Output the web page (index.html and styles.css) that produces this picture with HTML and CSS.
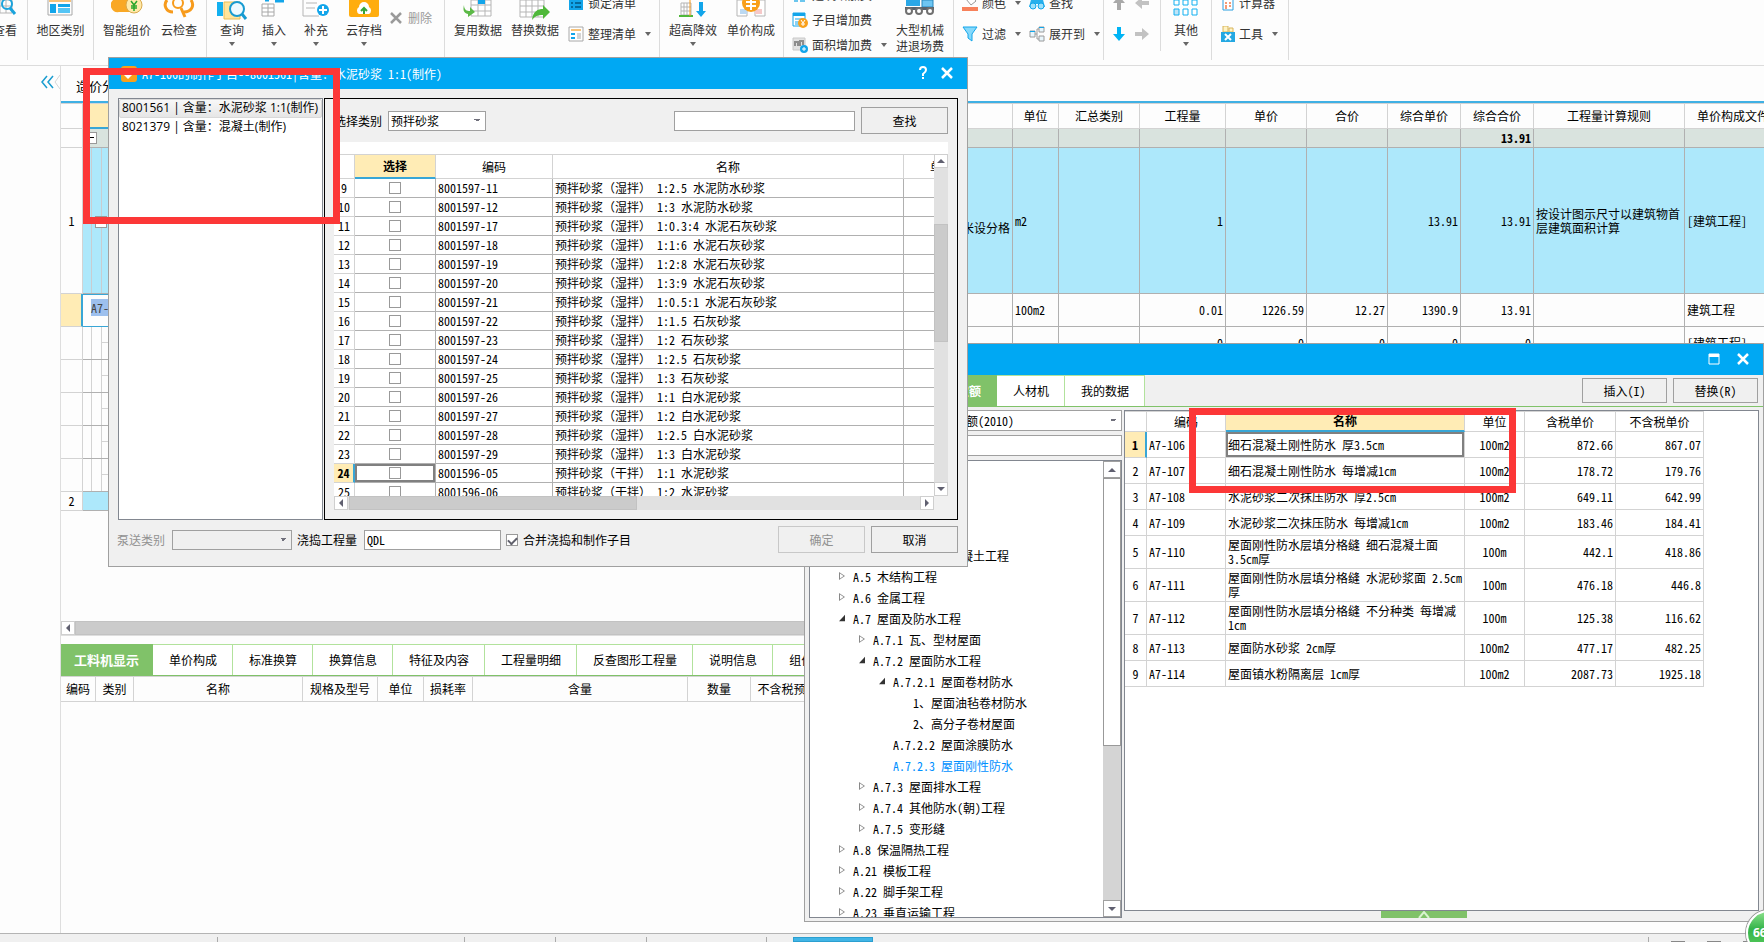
FILE: index.html
```html
<!DOCTYPE html>
<html lang="zh-CN">
<head>
<meta charset="utf-8">
<title>造价分析</title>
<link rel="stylesheet" href="styles.css">
</head>
<body>
<header class="ribbon">
  <div class="group g-view"><button class="big"><svg class="ico" width="24" height="18"><path d="M2 0h17v13H5M7 0v13M13 0v13M2 6h17" fill="none" stroke="#b5b5b5"/><circle cx="14" cy="4" r="5" fill="none" stroke="#1aa3dc" stroke-width="2"/><path d="M17 8l5 6" stroke="#1aa3dc" stroke-width="3"/></svg>查看</button></div>
  <div class="group g-area"><button class="big"><svg class="ico" width="26" height="18"><path d="M1 0v15h24V0" fill="none" stroke="#a8a8a8"/><path d="M2 0h22v2H2z" fill="#f6c27a"/><path d="M3 4h6v9H3zM11 4h12v3H11z" fill="#12a5ea"/><path d="M11 8h12v5H11z" fill="#55c5f5"/></svg>地区类别</button></div>
  <div class="group g-smart">
    <button class="big"><svg class="ico" width="32" height="18"><path d="M2 0a7 7 0 0 0 6 12h14V0z" fill="#f9a825"/><circle cx="23" cy="5" r="8" fill="#ffe9a8" stroke="#d9a94c"/><path d="M20 1l3 4 3-4M23 5v6M20 6h6M20 8h6" fill="none" stroke="#2ba62b" stroke-width="1.5"/></svg>智能组价</button>
    <button class="big"><svg class="ico" width="32" height="18"><path d="M4 0C0 5 3 12 10 12M28 0c4 6 0 12-7 12" fill="none" stroke="#f79b1c" stroke-width="3"/><circle cx="15" cy="3" r="5" fill="none" stroke="#f79b1c" stroke-width="2"/><path d="M18 8l4 9" stroke="#f79b1c" stroke-width="3"/></svg>云检查</button>
  </div>
  <div class="group g-edit">
    <button class="big"><svg class="ico" width="32" height="18" viewBox="0 0 32 18"><path d="M1 0h6v14H1z" fill="#12b0f0"/><path d="M8 0h16v17H8z" fill="#ffe49a" stroke="#e8bd57"/><circle cx="21" cy="7" r="7" fill="#eefaff" stroke="#179bd1" stroke-width="2"/><path d="M26 12l4 5" stroke="#179bd1" stroke-width="3"/></svg>查询<i class="caret"></i></button>
    <button class="big"><svg class="ico" width="28" height="18"><path d="M2 4h12v12H2zM8 4v12M2 8h12M2 12h12" fill="#fff" stroke="#a8a8a8"/><path d="M5 0h4M15 1h9" stroke="#12a5ea" stroke-width="3"/></svg>插入<i class="caret"></i></button>
    <button class="big"><svg class="ico" width="28" height="20"><path d="M1 0v16h16M4 3h11M4 8h9" fill="none" stroke="#b5b5b5"/><circle cx="21" cy="10" r="6" fill="#12a5ea"/><path d="M21 6v8M17 10h8" stroke="#fff" stroke-width="2"/></svg>补充<i class="caret"></i></button>
    <div class="pair"><button class="big"><svg class="ico" width="30" height="18"><path d="M0 0h30v15q0 2-2 2H2q-2 0-2-2z" fill="#ffad0e"/><path d="M10 14a4 4 0 0 1 0-7 5 5 0 0 1 10 0 4 4 0 0 1 0 7z" fill="#fff"/><path d="M15 14V9M12 11l3-3 3 3" fill="none" stroke="#35a53a" stroke-width="2"/></svg>云存档<i class="caret"></i></button>
    <button class="small disabled" disabled><svg width="12" height="12"><path d="M1 1l10 10M11 1L1 11" stroke="#9a9a9a" stroke-width="2.5"/></svg>删除</button></div>
  </div>
  <div class="group g-data">
    <button class="big"><svg class="ico" width="30" height="18"><path d="M8 0h20v16H8zM15 0v16M22 0v16M8 5h20M8 11h20" fill="#fff" stroke="#b5b5b5"/><path d="M15 0h7v4h-7z" fill="#12a5ea"/><path d="M1 5c0 5 3 6 6 6V7l5 5-7 5v-3C0 13 0 9 1 5z" fill="#5cb947"/></svg>复用数据</button>
    <button class="big"><svg class="ico" width="32" height="20"><path d="M1 0h24v17H1zM7 0v17M13 0v17M19 0v17M1 6h24M1 12h24" fill="#fff" stroke="#b5b5b5"/><path d="M13 20c1-9 6-11 11-11V5l7 7-7 7v-4c-5 0-8 1-11 5z" fill="#4fb83a"/></svg>替换数据</button>
    <div class="stack">
      <button class="small"><svg width="16" height="16"><path d="M1 1h14v14H1z" fill="#12a5ea"/><path d="M3 8h2M7 8h6M3 12h2M7 12h6" stroke="#056a9c" stroke-width="2"/></svg>锁定清单</button>
      <button class="small"><svg width="16" height="16"><path d="M1 1h14v14H1z" fill="#fff" stroke="#a8a8a8"/><path d="M3 3h10v2H3z" fill="#f6c27a"/><path d="M3 7h4v2H3zM3 11h4v2H3z" fill="#12a5ea"/><path d="M9 8h4M9 10h4M9 12h4" stroke="#aaa"/></svg>整理清单<i class="caret"></i></button>
    </div>
  </div>
  <div class="group g-price">
    <button class="big"><svg class="ico" width="28" height="20"><path d="M2 3h10v12H2zM5 3v12M8 3v12M2 7h10M2 11h10" fill="#fff" stroke="#b5b5b5"/><path d="M0 16h14" stroke="#4fb83a" stroke-width="2"/><path d="M11 0v16" stroke="#f79b1c"/><path d="M20 2h4v9h3l-5 6-5-6h3z" fill="#12a5ea"/></svg>超高降效<i class="caret"></i></button>
    <button class="big"><svg class="ico" width="30" height="18"><path d="M1 0h10v16H1zM19 0h10v16H19z" fill="#fff" stroke="#b5b5b5"/><path d="M4 9h7v5H4z" fill="#bcd9f2"/><path d="M19 9h7v5h-7z" fill="#f6c9c9"/><circle cx="15" cy="3" r="9" fill="#f9a01b"/><path d="M10 2h10M10 6h10M15 0v10" stroke="#fff" stroke-width="2"/></svg>单价构成</button>
  </div>
  <div class="group g-fee">
    <div class="stack triple">
      <button class="small"><svg width="16" height="16"><path d="M2 8h4v7H2zM8 5h5v10H8z" fill="#6cc6ee"/></svg>建筑增加费</button>
      <button class="small"><svg width="16" height="16"><path d="M1 1h12v13H1z" fill="#fff" stroke="#12a5ea"/><path d="M1 1h12v3H1z" fill="#12a5ea"/><path d="M3 7h8M3 10h5M3 12h4" stroke="#12a5ea"/><circle cx="11" cy="11" r="5" fill="#f9a01b"/><path d="M9 8l2 3 2-3M11 11v3M9 12h4" fill="none" stroke="#fff"/></svg>子目增加费</button>
      <button class="small"><svg width="16" height="16"><path d="M1 1h12v12H1z" fill="#e2e2e2" stroke="#c8c8c8"/><path d="M3 9V5h3v4M8 9V4h3v4" fill="none" stroke="#8d8d8d" stroke-width="2"/><circle cx="12" cy="12" r="4" fill="#12a5ea"/><path d="M12 10v4M10 12h4" stroke="#fff"/></svg>面积增加费<i class="caret"></i></button>
    </div>
    <button class="big"><svg class="ico" width="32" height="18"><path d="M2 0h14v6H2z" fill="#2aa7e6"/><path d="M18 0h11v7H18z" fill="#6ec6f3" stroke="#2987bd"/><path d="M1 7h29v3H1z" fill="#58636e"/><g fill="#fff" stroke="#707070" stroke-width="2"><circle cx="5" cy="11" r="3"/><circle cx="15" cy="11" r="3"/><circle cx="26" cy="11" r="3"/></g></svg>大型机械<br>进退场费</button>
  </div>
  <div class="group g-filter">
    <div class="stack">
      <button class="small"><svg width="16" height="16"><path d="M4 4l5-4 5 6-5 4z" fill="#fff" stroke="#999"/><path d="M0 12h16v4H0z" fill="#f7815b"/></svg>颜色<i class="caret"></i></button>
      <button class="small"><svg width="16" height="16"><path d="M1 1h14L10 8v7l-4-3V8z" fill="#86d9fb" stroke="#12a5ea"/></svg>过滤<i class="caret"></i></button>
    </div>
    <div class="stack">
      <button class="small"><svg width="16" height="16"><path d="M3 1h3v4h4V1h3l3 11H9V9H7v3H0z" fill="#27b0ec"/><circle cx="4" cy="11" r="3" fill="#9ee2fb" stroke="#12a5ea"/><circle cx="12" cy="11" r="3" fill="#9ee2fb" stroke="#12a5ea"/></svg>查找</button>
      <button class="small"><svg width="16" height="16"><g fill="#e8f5fb" stroke="#9a9a9a"><path d="M1 5h5v6H1zM10 1h5v5h-5zM10 10h5v5h-5z"/><path d="M6 8h2M8 3v10M8 3h2M8 13h2" fill="none"/></g><path d="M1 5h5v1H1zM10 1h5v1h-5z" fill="#12a5ea"/></svg>展开到<i class="caret"></i></button>
    </div>
  </div>
  <div class="group g-move">
    <div class="stack">
      <button class="small" aria-label="上移"><svg width="14" height="16"><path d="M7 1l6 7H9v7H5V8H1z" fill="#a9a9a9"/></svg></button>
      <button class="small" aria-label="下移"><svg width="14" height="16"><path d="M7 15l6-7H9V1H5v7H1z" fill="#00b4f5"/></svg></button>
    </div>
    <div class="stack">
      <button class="small" aria-label="左移"><svg width="16" height="14"><path d="M1 7l7-6v4h7v4H8v4z" fill="#c2c2c2"/></svg></button>
      <button class="small" aria-label="右移"><svg width="16" height="14"><path d="M15 7L8 1v4H1v4h7v4z" fill="#c2c2c2"/></svg></button>
    </div>
  </div>
  <div class="group g-other"><button class="big"><svg class="ico" width="26" height="18"><g fill="#fff" stroke="#12b0f0"><path d="M1 0h5v5H1zM10 0h5v5h-5zM19 0h5v5h-5z"/><path d="M1 9h5v6H1z" fill="#bfe4f7"/><path d="M10 9h5v6h-5zM19 9h5v6h-5z"/></g></svg>其他<i class="caret"></i></button></div>
  <div class="group g-tools">
    <div class="stack">
      <button class="small"><svg width="14" height="16"><path d="M2 1h10v14H2z" fill="#fff" stroke="#2a9fe0"/><path d="M4 3h6v2H4z" fill="#2a9fe0"/><path d="M4 8h2M8 8h2M4 11h2M8 11h2M4 13h2" stroke="#f07a4a" stroke-width="1.5"/></svg>计算器</button>
      <button class="small"><svg width="14" height="16"><path d="M2 0h5v6H2zM8 2h4v4H8z" fill="#fff3c4" stroke="#d7b45b"/><path d="M0 6h14v10H0z" fill="#24a8e2"/><path d="M4 8l6 6M10 8l-6 6" stroke="#fff" stroke-width="2"/></svg>工具<i class="caret"></i></button>
    </div>
  </div>
</header>

<main class="workspace">
  <aside class="gutter">
    <button aria-label="收起"><svg width="20" height="32" viewBox="0 2 20 32" fill="none"><path d="M7 12l-5 6 5 6M13 12l-5 6 5 6" stroke="#1b9dd0" stroke-width="1.5"/><path d="M20 11l-5 7 5 7" stroke="#d6d6d6"/></svg></button>
  </aside>
  <section class="content">
    <nav class="top-tabs"><a href="#">造价分析</a></nav>
    <div class="sheet">
      <table class="cells main-table">
        <colgroup><col class="w22"><col class="w250"><col class="w680"><col class="w46"><col class="w81"><col class="w86"><col class="w81"><col class="w81"><col class="w73"><col class="w73"><col class="w151"><col class="w97"></colgroup>
        <thead><tr><th></th><th class="hot">编码</th><th>名称</th><th>单位</th><th>汇总类别</th><th>工程量</th><th>单价</th><th>合价</th><th>综合单价</th><th>综合合价</th><th>工程量计算规则</th><th>单价构成文件</th></tr></thead>
        <tbody>
          <tr class="sum"><th></th><td class="code"><i class="box"></i></td><td></td><td></td><td></td><td></td><td></td><td></td><td></td><td class="num"><b>13.91</b></td><td></td><td></td></tr>
          <tr class="item tall"><th>1</th><td class="code"><i class="box inner"></i></td><td class="num desc">米设分格</td><td>m2</td><td></td><td class="num">1</td><td></td><td></td><td class="num">13.91</td><td class="num">13.91</td><td>按设计图示尺寸以建筑物首层建筑面积计算</td><td>[建筑工程]</td></tr>
          <tr class="sub"><th class="hot-row"></th><td class="edit"><mark>A7-106</mark></td><td></td><td>100m2</td><td></td><td class="num">0.01</td><td class="num">1226.59</td><td class="num">12.27</td><td class="num">1390.9</td><td class="num">13.91</td><td></td><td>建筑工程</td></tr>
          <tr class="sub"><th></th><td class="branch"></td><td></td><td></td><td></td><td class="num">0</td><td class="num">0</td><td class="num">0</td><td class="num">0</td><td class="num">0</td><td></td><td>[建筑工程]</td></tr>
          <tr class="sub"><th></th><td class="branch"></td><td></td><td></td><td></td><td></td><td></td><td></td><td></td><td></td><td></td><td></td></tr>
          <tr class="sub"><th></th><td class="branch"></td><td></td><td></td><td></td><td></td><td></td><td></td><td></td><td></td><td></td><td></td></tr>
          <tr class="sub"><th></th><td class="branch"></td><td></td><td></td><td></td><td></td><td></td><td></td><td></td><td></td><td></td><td></td></tr>
          <tr class="sub"><th></th><td class="branch"></td><td></td><td></td><td></td><td></td><td></td><td></td><td></td><td></td><td></td><td></td></tr>
          <tr class="item short"><th>2</th><td></td><td></td><td></td><td></td><td></td><td></td><td></td><td></td><td></td><td></td><td></td></tr>
        </tbody>
      </table>
    </div>
    <div class="hbar"><button class="sb" aria-label="向左"><i class="tri left"></i></button><span class="thumb grow"></span></div>
    <div class="detail">
      <nav class="tabs"><a class="on" href="#">工料机显示</a><a href="#">单价构成</a><a href="#">标准换算</a><a href="#">换算信息</a><a href="#">特征及内容</a><a href="#">工程量明细</a><a href="#">反查图形工程量</a><a href="#">说明信息</a><a href="#">组价方案</a></nav>
      <div class="detail-grid">
        <table class="cells detail-table">
          <colgroup><col class="w35"><col class="w38"><col class="w169"><col class="w75"><col class="w46"><col class="w49"><col class="w215"><col class="w63"><col class="w86"></colgroup>
          <thead><tr><th>编码</th><th>类别</th><th>名称</th><th>规格及型号</th><th>单位</th><th>损耗率</th><th>含量</th><th>数量</th><th>不含税预算价</th></tr></thead>
        </table>
      </div>
    </div>
  </section>
</main>
<footer class="status"><span class="s1"></span><span class="s2"></span><span class="s3"></span><span class="s4"></span><span class="s5"></span><span class="task"></span><span class="s6"></span><span class="dash"></span><span class="dash"></span><span class="dash"></span></footer>

<section class="window query">
  <div class="title"><span class="win-btns"><button aria-label="最大化"><svg width="12" height="12"><path d="M1 1h10v10H1z" fill="none" stroke="#fff"/><path d="M1 1h10v3H1z" fill="#fff"/></svg></button><button aria-label="关闭"><svg width="12" height="12"><path d="M1 1l10 10M11 1L1 11" stroke="#fff" stroke-width="2.5"/></svg></button></span></div>
  <div class="query-top">
    <nav class="tabs"><a href="#">清单指引</a><a href="#">清单</a><a class="on" href="#">定额</a><a href="#">人材机</a><a href="#">我的数据</a></nav>
    <div class="actions"><button class="btn">插入(I)</button><button class="btn">替换(R)</button></div>
  </div>
  <div class="query-body">
    <div class="side">
      <select class="combo" aria-label="定额库"><option>广东省建筑与装饰工程综合定额(2010)</option></select>
      <input class="field" type="text" aria-label="搜索定额">
      <div class="tree-box">
        <ul class="tree">
          <li><span class="open">建筑工程</span>
          <ul>
            <li><span class="shut">A.1 土石方</span></li>
            <li><span class="shut">A.2 桩基础</span></li>
            <li><span class="shut">A.3 砌筑工程</span></li>
            <li><span class="shut">A.4 混凝土及钢筋混凝土工程</span></li>
            <li><span class="shut">A.5 木结构工程</span></li>
            <li><span class="shut">A.6 金属工程</span></li>
            <li><span class="open">A.7 屋面及防水工程</span>
              <ul>
                <li><span class="shut">A.7.1 瓦、型材屋面</span></li>
                <li><span class="open">A.7.2 屋面防水工程</span>
                  <ul>
                    <li><span class="open">A.7.2.1 屋面卷材防水</span>
                      <ul><li><span>1、屋面油毡卷材防水</span></li><li><span>2、高分子卷材屋面</span></li></ul></li>
                    <li><span>A.7.2.2 屋面涂膜防水</span></li>
                    <li><span class="current">A.7.2.3 屋面刚性防水</span></li>
                  </ul></li>
                <li><span class="shut">A.7.3 屋面排水工程</span></li>
                <li><span class="shut">A.7.4 其他防水(朝)工程</span></li>
                <li><span class="shut">A.7.5 变形缝</span></li>
              </ul></li>
            <li><span class="shut">A.8 保温隔热工程</span></li>
            <li><span class="shut">A.21 模板工程</span></li>
            <li><span class="shut">A.22 脚手架工程</span></li>
            <li><span class="shut">A.23 垂直运输工程</span></li>
          </ul></li>
        </ul>
        <div class="vbar wide"><button class="sb" aria-label="向上"><i class="tri up"></i></button><span class="thumb"></span><button class="sb end" aria-label="向下"><i class="tri down"></i></button></div>
      </div>
    </div>
    <div class="quota-col">
      <div class="quota">
        <table class="cells quota-table">
          <colgroup><col class="w22"><col class="w79"><col class="w239"><col class="w60"><col class="w91"><col class="w88"></colgroup>
          <thead><tr><th></th><th>编码</th><th class="hot">名称</th><th>单位</th><th>含税单价</th><th>不含税单价</th></tr></thead>
          <tbody>
            <tr><th class="hot-row">1</th><td>A7-106</td><td class="picked">细石混凝土刚性防水 厚3.5cm</td><td>100m2</td><td>872.66</td><td>867.07</td></tr>
            <tr><th>2</th><td>A7-107</td><td>细石混凝土刚性防水 每增减1cm</td><td>100m2</td><td>178.72</td><td>179.76</td></tr>
            <tr><th>3</th><td>A7-108</td><td>水泥砂浆二次抹压防水 厚2.5cm</td><td>100m2</td><td>649.11</td><td>642.99</td></tr>
            <tr><th>4</th><td>A7-109</td><td>水泥砂浆二次抹压防水 每增减1cm</td><td>100m2</td><td>183.46</td><td>184.41</td></tr>
            <tr class="two"><th>5</th><td>A7-110</td><td>屋面刚性防水层填分格缝 细石混凝土面<br>3.5cm厚</td><td>100m</td><td>442.1</td><td>418.86</td></tr>
            <tr class="two"><th>6</th><td>A7-111</td><td>屋面刚性防水层填分格缝 水泥砂浆面 2.5cm<br>厚</td><td>100m</td><td>476.18</td><td>446.8</td></tr>
            <tr class="two"><th>7</th><td>A7-112</td><td>屋面刚性防水层填分格缝 不分种类 每增减<br>1cm</td><td>100m</td><td>125.38</td><td>116.62</td></tr>
            <tr><th>8</th><td>A7-113</td><td>屋面防水砂浆 2cm厚</td><td>100m2</td><td>477.17</td><td>482.25</td></tr>
            <tr><th>9</th><td>A7-114</td><td>屋面镇水粉隔离层 1cm厚</td><td>100m2</td><td>2087.73</td><td>1925.18</td></tr>
          </tbody>
        </table>
      </div>
      <button class="expander" aria-label="展开"><svg width="12" height="7"><path d="M1 7l5-6 5 6" fill="none" stroke="#d9f2cf" stroke-width="2"/></svg></button>
    </div>
  </div>
</section>

<section class="window maker" role="dialog" aria-labelledby="maker-title">
  <div class="title"><svg class="app" width="16" height="16"><rect width="16" height="16" rx="3" fill="#f9a01b"/><path d="M3 9l4 4 7-7-3-3-4 5-2-2z" fill="#fff"/></svg><span id="maker-title">A7-106的制作子目--8001561|含量：水泥砂浆 1:1(制作)</span><span class="win-btns"><button aria-label="帮助"><svg width="10" height="14"><path d="M2 4q0-3 3-3t3 3q0 2-3 4v2" fill="none" stroke="#fff" stroke-width="2"/><path d="M4 11h2v2H4z" fill="#fff"/></svg></button><button aria-label="关闭"><svg width="12" height="12"><path d="M1 1l10 10M11 1L1 11" stroke="#fff" stroke-width="2.5"/></svg></button></span></div>
  <div class="maker-body">
    <ul class="list"><li class="sel">8001561 | 含量：水泥砂浆 1:1(制作)</li><li>8021379 | 含量：混凝土(制作)</li></ul>
    <div class="frame">
      <div class="finder"><label for="kind">选择类别</label><select id="kind" class="combo"><option>预拌砂浆</option></select><input class="field" type="text" aria-label="查找内容"><button class="btn">查找</button></div>
      <div class="grid-wrap">
        <div class="viewport">
          <table class="cells mix">
            <colgroup><col class="w21"><col class="w81"><col class="w117"><col class="w351"><col class="w77"></colgroup>
            <thead><tr><th></th><th class="hot">选择</th><th>编码</th><th>名称</th><th>单位</th></tr></thead>
            <tbody>
              <tr><th>9</th><td><input type="checkbox" aria-label="选择 9"></td><td>8001597-11</td><td>预拌砂浆（湿拌） 1:2.5 水泥防水砂浆</td><td></td></tr>
              <tr><th>10</th><td><input type="checkbox" aria-label="选择 10"></td><td>8001597-12</td><td>预拌砂浆（湿拌） 1:3 水泥防水砂浆</td><td></td></tr>
              <tr><th>11</th><td><input type="checkbox" aria-label="选择 11"></td><td>8001597-17</td><td>预拌砂浆（湿拌） 1:0.3:4 水泥石灰砂浆</td><td></td></tr>
              <tr><th>12</th><td><input type="checkbox" aria-label="选择 12"></td><td>8001597-18</td><td>预拌砂浆（湿拌） 1:1:6 水泥石灰砂浆</td><td></td></tr>
              <tr><th>13</th><td><input type="checkbox" aria-label="选择 13"></td><td>8001597-19</td><td>预拌砂浆（湿拌） 1:2:8 水泥石灰砂浆</td><td></td></tr>
              <tr><th>14</th><td><input type="checkbox" aria-label="选择 14"></td><td>8001597-20</td><td>预拌砂浆（湿拌） 1:3:9 水泥石灰砂浆</td><td></td></tr>
              <tr><th>15</th><td><input type="checkbox" aria-label="选择 15"></td><td>8001597-21</td><td>预拌砂浆（湿拌） 1:0.5:1 水泥石灰砂浆</td><td></td></tr>
              <tr><th>16</th><td><input type="checkbox" aria-label="选择 16"></td><td>8001597-22</td><td>预拌砂浆（湿拌） 1:1.5 石灰砂浆</td><td></td></tr>
              <tr><th>17</th><td><input type="checkbox" aria-label="选择 17"></td><td>8001597-23</td><td>预拌砂浆（湿拌） 1:2 石灰砂浆</td><td></td></tr>
              <tr><th>18</th><td><input type="checkbox" aria-label="选择 18"></td><td>8001597-24</td><td>预拌砂浆（湿拌） 1:2.5 石灰砂浆</td><td></td></tr>
              <tr><th>19</th><td><input type="checkbox" aria-label="选择 19"></td><td>8001597-25</td><td>预拌砂浆（湿拌） 1:3 石灰砂浆</td><td></td></tr>
              <tr><th>20</th><td><input type="checkbox" aria-label="选择 20"></td><td>8001597-26</td><td>预拌砂浆（湿拌） 1:1 白水泥砂浆</td><td></td></tr>
              <tr><th>21</th><td><input type="checkbox" aria-label="选择 21"></td><td>8001597-27</td><td>预拌砂浆（湿拌） 1:2 白水泥砂浆</td><td></td></tr>
              <tr><th>22</th><td><input type="checkbox" aria-label="选择 22"></td><td>8001597-28</td><td>预拌砂浆（湿拌） 1:2.5 白水泥砂浆</td><td></td></tr>
              <tr><th>23</th><td><input type="checkbox" aria-label="选择 23"></td><td>8001597-29</td><td>预拌砂浆（湿拌） 1:3 白水泥砂浆</td><td></td></tr>
              <tr><th class="hot-row">24</th><td class="picked"><input type="checkbox" aria-label="选择 24"></td><td>8001596-05</td><td>预拌砂浆（干拌） 1:1 水泥砂浆</td><td></td></tr>
              <tr><th>25</th><td><input type="checkbox" aria-label="选择 25"></td><td>8001596-06</td><td>预拌砂浆（干拌） 1:2 水泥砂浆</td><td></td></tr>
            </tbody>
          </table>
        </div>
        <div class="vbar"><button class="sb" aria-label="向上"><i class="tri up"></i></button><span class="thumb"></span><button class="sb end" aria-label="向下"><i class="tri down"></i></button></div>
        <div class="hbar"><button class="sb" aria-label="向左"><i class="tri left"></i></button><span class="thumb"></span><button class="sb end" aria-label="向右"><i class="tri right"></i></button></div>
      </div>
    </div>
  </div>
  <div class="maker-foot">
    <label class="dim" for="pump">泵送类别</label><select id="pump" class="combo off" disabled></select>
    <label for="qty">浇捣工程量</label><input id="qty" class="field" type="text" value="QDL">
    <label class="merge"><input type="checkbox" checked>合并浇捣和制作子目</label>
    <div class="actions"><button class="btn" disabled>确定</button><button class="btn">取消</button></div>
  </div>
</section>

<div class="callout one"></div>
<div class="callout two-box"></div>
<div class="badge">66</div>
</body>
</html>
```

FILE: styles.css
```css
* { box-sizing: border-box; }
body {
  margin: 0;
  height: 100vh;
  overflow: hidden;
  position: relative;
  display: flex;
  flex-direction: column;
  background: #fdfdfd;
  color: #000;
  font: 12px/14px "Noto Sans Mono CJK SC", "Noto Sans CJK SC", sans-serif;
}
button, input, select { font: inherit; color: inherit; margin: 0; }
button { background: none; border: 0; padding: 0; }
a { color: inherit; text-decoration: none; }
ul { list-style: none; margin: 0; padding: 0; }

/* ribbon */
.ribbon {
  flex: none;
  height: 66px;
  display: flex;
  overflow: hidden;
  border-bottom: 1px solid #dcdcdc;
  font-family: "Noto Sans CJK SC", sans-serif;
  color: #333;
}
.group { flex: none; display: flex; height: 60px; border-right: 1px solid #dcdcdc; }
.big {
  display: flex;
  flex-direction: column;
  align-items: center;
  line-height: 16px;
  white-space: nowrap;
  align-self: flex-start;
}
.big .ico { height: 22px; margin: 0 -10px; flex: none; }
.big .caret { margin-top: 4px; }
.small { display: flex; align-items: center; gap: 4px; height: 31px; white-space: nowrap; }
.small .caret { margin-left: 5px; }
.disabled { color: #999; gap: 6px; }
.caret { width: 0; height: 0; border: 3px solid transparent; border-top: 4px solid #666; border-bottom: 0; }
.stack { display: flex; flex-direction: column; align-items: flex-start; margin-top: -13px; }
.triple { margin-top: -18px; }
.triple .small { height: 25px; }
.pair { display: flex; gap: 8px; }
.g-view { width: 28px; justify-content: flex-end; padding-right: 10px; }
.g-area { width: 66px; justify-content: center; }
.g-smart { width: 113px; padding-left: 9px; gap: 10px; }
.g-edit { width: 238px; padding-left: 13px; gap: 18px; }
.g-data { width: 215px; padding-left: 9px; gap: 9px; }
.g-price { width: 124px; padding-left: 9px; gap: 10px; }
.g-fee { width: 170px; padding-left: 8px; gap: 9px; }
.g-filter { width: 150px; padding-left: 8px; gap: 8px; }
.g-move { width: 57px; padding-left: 8px; gap: 8px; height: 51px; }
.g-move .stack { align-items: center; }
.g-other { width: 51px; justify-content: center; }
.g-tools { width: 77px; padding-left: 9px; }
.g-edit .pair .small { height: 36px; }

/* workspace */
.workspace { flex: 1; min-height: 0; display: flex; }
.gutter { width: 60px; display: flex; align-items: flex-start; justify-content: flex-end; }
.content { flex: 1; min-width: 0; display: flex; flex-direction: column; border-left: 1px solid #dedede; }
.top-tabs { height: 37px; padding: 11px 15px; border-bottom: 2px solid #3fb0e4; font-size: 13px; line-height: 18px; }
.sheet { flex: 1; min-height: 0; overflow: hidden; }

.cells { table-layout: fixed; border-collapse: separate; border-spacing: 0; width: 0; }
.cells th, .cells td {
  padding: 0 2px;
  border: 0 solid #b0b0b0;
  border-width: 0 1px 1px 0;
  font-weight: normal;
  text-align: left;
  overflow: hidden;
}
.cells th { border-color: #d3d3d3; text-align: center; padding: 0; white-space: nowrap; }
.cells thead th { border-top-width: 1px; }
.cells .num { text-align: right; }
.cells thead .hot { background: #ffecb5; border-bottom: 2px solid #38a6d6; font-weight: bold; }
.cells .hot-row { background: #ffecb5; border-right: 2px solid #38a6d6; font-weight: bold; }
.cells .picked { box-shadow: inset 0 0 0 2px #808080; }
.w21 { width: 21px; } .w22 { width: 22px; } .w35 { width: 35px; } .w38 { width: 38px; }
.w46 { width: 46px; } .w49 { width: 49px; } .w60 { width: 60px; } .w63 { width: 63px; }
.w73 { width: 73px; } .w75 { width: 75px; } .w77 { width: 77px; } .w79 { width: 79px; }
.w81 { width: 81px; } .w86 { width: 86px; } .w88 { width: 88px; } .w91 { width: 91px; }
.w97 { width: 97px; } .w117 { width: 117px; } .w151 { width: 151px; } .w169 { width: 169px; }
.w215 { width: 215px; } .w239 { width: 239px; } .w250 { width: 250px; } .w351 { width: 351px; }
.w680 { width: 680px; }

.main-table thead th { height: 26px; }
.sum td { height: 19px; background: #d9e3de; }
.tall td { height: 146px; }
.item td { background: #ade8fb; }
.sub td { height: 33px; }
.short td { height: 19px; }
.cells .desc { padding-top: 14px; }
.cells .code { position: relative; }
.cells .tall .code {
  background: linear-gradient(#c9ccd0, #c9ccd0) 8px 0 / 1px 100% no-repeat, linear-gradient(#c9ccd0, #c9ccd0) 18px 0 / 1px 100% no-repeat, #ade8fb;
}
.box { position: absolute; left: 2px; top: 3px; width: 12px; height: 12px; background: #fff; border: 1px solid #999; }
.box::after { content: ""; display: block; margin: 4px 2px; height: 1px; background: #000; }
.box.inner { left: 12px; top: 68px; }
.cells .edit { border-top: 1px solid #38a6d6; border-bottom-color: #38a6d6; padding: 0 8px 6px; }
mark { background: #9dc0ee; color: #444; }
.cells .branch {
  background: linear-gradient(#d3d3d3, #d3d3d3) 8px 0 / 1px 100% no-repeat, linear-gradient(#d3d3d3, #d3d3d3) 18px 0 / 1px 100% no-repeat, linear-gradient(#d3d3d3, #d3d3d3) 18px 15px / 100% 1px no-repeat;
}

/* scroll bars */
.hbar { display: flex; height: 14px; flex: none; background: #e1e1e1; }
.vbar { display: flex; flex-direction: column; width: 14px; background: #e1e1e1; }
.sb { flex: none; width: 14px; height: 14px; background: #fff; border: 1px solid #cfcfcf; display: flex; align-items: center; justify-content: center; }
.thumb { background: #cbcbcb; border: 1px solid #c2c2c2; }
.grow { flex: 1; }
.end { margin-left: auto; }
.vbar .end { margin: auto 0 0; }
.tri { flex: none; border: 4px solid transparent; }
.up { border-bottom-color: #606070; border-top: 0; }
.down { border-top-color: #606070; border-bottom: 0; }
.left { border-right-color: #606070; border-left: 0; }
.right { border-left-color: #606070; border-right: 0; }

/* tabs */
.tabs { display: flex; overflow: hidden; }
.tabs a {
  flex: none;
  height: 31px;
  padding: 0 15px 0 16px;
  display: flex;
  align-items: center;
  background: #fff;
  border: solid #b2e29c;
  border-width: 1px 1px 0 0;
}
.tabs .on { background: #80c269; border-color: #80c269; color: #fff; font-weight: bold; }
.detail { flex: none; height: 298px; border-top: 1px solid #dedede; padding-top: 8px; }
.detail .tabs { border-bottom: 1px solid #80c269; }
.detail .tabs .on { font-size: 13px; padding: 0 13px; }
.detail-grid { overflow: hidden; }
.detail-table th { height: 26px; }

/* status bar */
.status { flex: none; height: 9px; display: flex; background: #f0f0f0; border-top: 1px solid #b4b4b4; }
.status span { flex: none; margin-top: 3px; border-right: 1px solid #aaa; }
.s1 { width: 218px; } .s2 { width: 247px; } .s3 { width: 91px; } .s4 { width: 91px; } .s5 { width: 120px; }
.status .task { width: 80px; margin-left: 26px; background: #41b5e6; border: 1px solid #2b9fd0; }
.status .s6 { width: 776px; }
.status .dash { width: 14px; margin: 7px 0 0 22px; background: #888; border: 0; }

/* windows */
.window { position: absolute; display: flex; flex-direction: column; background: #f0f0f0; border: 1px solid #a0a0a0; }
.title { flex: none; height: 31px; display: flex; align-items: center; background: #00a8f3; color: #fff; }
.win-btns { margin-left: auto; display: flex; align-items: center; gap: 13px; padding-right: 14px; }
.query .win-btns { gap: 17px; }
.actions { display: flex; gap: 6px; margin-left: auto; }
.btn { background: #f0f0f0; border: 1px solid #a0a0a0; }
.btn:disabled { color: #929292; border-color: #c8c8c8; }
.combo {
  appearance: none;
  height: 20px;
  padding: 0 2px;
  border: 1px solid #a0a0a0;
  border-radius: 0;
  background: linear-gradient(to bottom right, #70707c 50%, transparent 50%) right 5px center / 3px 3px no-repeat, linear-gradient(to bottom left, #70707c 50%, transparent 50%) right 8px center / 3px 3px no-repeat, #fff;
}
.combo.off { background-color: #f0f0f0; opacity: 1; }
.field { height: 20px; padding: 0 2px; border: 1px solid #a0a0a0; background: #fff; }
input[type="checkbox"] { appearance: none; width: 12px; height: 12px; border: 1px solid #999; background: #fff; display: block; }
input[type="checkbox"]:checked::after {
  content: "";
  display: block;
  width: 7px;
  height: 4px;
  margin: 2px 1px;
  border: solid #60606c;
  border-width: 0 0 2px 2px;
  rotate: -45deg;
}

.maker { left: 108px; top: 57px; width: 860px; height: 510px; }
.maker .title { padding-left: 12px; }
.app { margin-right: 5px; }
.maker-body { flex: 1; min-height: 0; display: flex; gap: 1px; padding: 9px 9px 0; }
.list { flex: none; width: 205px; border: 1px solid #828790; background: #fff; font-family: "Open Sans", "Noto Sans CJK SC", sans-serif; }
.list li { height: 19px; padding: 0 3px; line-height: 17px; white-space: nowrap; }
.list .sel { border: 1px solid #d9d9d9; border-radius: 2px; background: linear-gradient(#f8f8f8, #e6e6e6); padding: 0 2px; line-height: 16px; }
.frame { flex: 1; min-width: 0; display: flex; flex-direction: column; border: 1px solid #000; padding: 0 9px 9px; }
.finder { flex: none; height: 43px; display: flex; align-items: center; }
.finder .combo { width: 98px; margin-left: 6px; }
.finder .field { width: 181px; margin: 0 6px 0 auto; }
.finder .btn { width: 87px; height: 27px; }
.grid-wrap { flex: 1; min-height: 0; display: grid; grid-template: minmax(0, 1fr) 14px / minmax(0, 1fr) 14px; padding-top: 12px; background: linear-gradient(#fff 12px, #f0f0f0 12px); }
.viewport { overflow: hidden; background: #fff; }
.mix thead th { height: 25px; }
.mix td { height: 19px; white-space: nowrap; }
.mix td:nth-child(2) { padding: 0 34px; }
.grid-wrap .vbar .thumb { margin-top: 56px; height: 118px; }
.grid-wrap .hbar .thumb { width: 288px; margin-left: 1px; }
.maker-foot { flex: none; display: flex; align-items: center; height: 46px; padding: 0 9px 7px 8px; }
.maker-foot .combo { width: 120px; margin: 0 5px 0 7px; }
.maker-foot .field { width: 137px; margin: 0 5px 0 7px; }
.dim { color: #929292; }
.merge { display: flex; align-items: center; gap: 5px; }
.maker-foot .btn { width: 87px; height: 27px; }

.query { left: 804px; right: 0; top: 343px; bottom: 20px; }
.query-top { flex: none; display: flex; align-items: center; border-bottom: 1px solid #80c269; padding-right: 5px; }
.query-top .btn { width: 85px; height: 25px; }
.query-body { flex: 1; min-height: 0; display: flex; gap: 2px; padding: 3px 4px; }
.side { width: 313px; display: flex; flex-direction: column; gap: 4px; }
.side .combo { height: 21px; padding-left: 0; }
.side .field { height: 21px; }
.tree-box { flex: 1; min-height: 0; display: flex; border: 1px solid #828790; background: #fff; }
.tree { flex: 1; overflow: hidden; padding-left: 12px; }
.tree ul { padding-left: 20px; }
.tree span { display: block; height: 21px; line-height: 21px; padding-left: 11px; white-space: nowrap; }
.tree span::before { content: ""; float: left; width: 6px; height: 8px; margin: 6px 8px 0 -14px; }
.tree .shut::before { background: #888; clip-path: polygon(0 0, 100% 50%, 0 100%, 0 0, 17% 20%, 17% 80%, 76% 50%, 17% 20%); }
.tree .open::before { background: #333; clip-path: polygon(100% 10%, 100% 90%, 0 90%); }
.tree .current { color: #0090ff; }
.vbar.wide { width: 18px; background: #d4d4d4; }
.wide .sb { width: 18px; height: 17px; border-color: #a0a0a0; }
.wide .thumb { height: 268px; background: #fff; border-color: #999; }
.quota-col { flex: 1; min-width: 0; display: flex; flex-direction: column; align-items: center; }
.quota { flex: 1; min-height: 0; align-self: stretch; border: 1px solid #828790; background: #fff; overflow: hidden; }
.quota-table thead th { height: 21px; }
.quota-table th, .quota-table td { border-color: #d3d3d3; }
.quota-table td { height: 26px; }
.quota-table .two td { height: 33px; }
.quota-table td:nth-child(3) { white-space: nowrap; }
.quota-table td:nth-child(4) { text-align: center; }
.quota-table td:nth-child(n+5) { text-align: right; }
.expander { flex: none; width: 86px; height: 7px; background: #80c269; display: flex; justify-content: center; margin-left: -36px; }

.callout { position: absolute; border: 7px solid #fc3737; pointer-events: none; }
.one { left: 83px; top: 68px; width: 257px; height: 156px; }
.two-box { left: 1189px; top: 408px; width: 327px; height: 85px; }
.badge {
  position: absolute;
  right: -28px;
  bottom: -14px;
  width: 46px;
  height: 46px;
  padding: 14px 5px;
  border: 2px solid #fff;
  border-radius: 50%;
  background: linear-gradient(#8be08b, #35b44a 40%, #5fd05f);
  box-shadow: 0 0 0 1px #999;
  color: #fff;
  font: bold 12px/14px "Open Sans", sans-serif;
}
```
